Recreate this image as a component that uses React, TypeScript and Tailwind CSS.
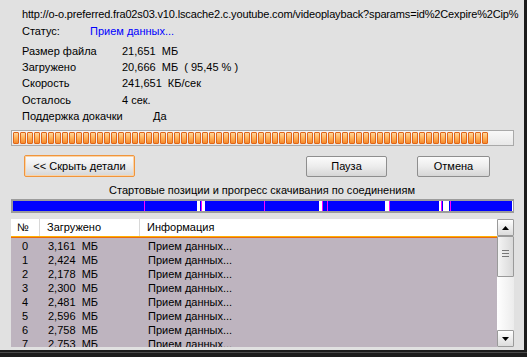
import React from 'react';

const info = [
  { label: 'Размер файла', value: '21,651  МБ' },
  { label: 'Загружено', value: '20,666  МБ  ( 95,45 % )' },
  { label: 'Скорость', value: '241,651  КБ/сек' },
];

const rows = [
  ['0', '3,161  МБ'],
  ['1', '2,424  МБ'],
  ['2', '2,178  МБ'],
  ['3', '2,300  МБ'],
  ['4', '2,481  МБ'],
  ['5', '2,596  МБ'],
  ['6', '2,758  МБ'],
  ['7', '2,753  МБ'],
];

// markers on the connections bar: [left, width, colour]
const marks: [number, number, string][] = [
  [131, 1, '#ff00ff'],
  [184, 3, '#ffffff'],
  [188, 1, '#ff00ff'],
  [189, 3, '#ffffff'],
  [251, 1, '#ff00ff'],
  [306, 3, '#ffffff'],
  [309, 1, '#ff00ff'],
  [314, 1, '#ff00ff'],
  [372, 4, '#ffffff'],
  [376, 1, '#ff00ff'],
  [426, 2, '#ffffff'],
  [428, 1, '#ff00ff'],
  [430, 6, '#ffffff'],
  [437, 1, '#ff00ff'],
  [499, 1, '#ffffff'],
];

function Segments() {
  return (
    <div className="flex h-full items-center pl-[1px]">
      {Array.from({ length: 68 }).map((_, i) => (
        <div
          key={i}
          className="w-[6px] h-[12px] mr-[1px] border border-[#e0661a] rounded-[1px] bg-gradient-to-b from-[#ffd59a] via-[#ffb35a] to-[#f58a2a]"
        />
      ))}
    </div>
  );
}

function Btn({ label, className }: { label: string; className: string }) {
  return (
    <div
      className={`flex items-center justify-center rounded-[2px] bg-gradient-to-b from-[#fbfbfb] via-[#ececec] to-[#d6d6d6] text-[11px] ${className}`}
    >
      {label}
    </div>
  );
}

export default function App() {
  return (
    <div className="w-[527px] h-[357px] bg-[#1c1c1c] flex flex-col overflow-hidden font-['Liberation_Sans',sans-serif] text-[11px] text-black">
      <div className="w-[524px] h-[350px] bg-[#e1e1e1] flex flex-col">
        <div className="pl-[22px] mt-[6px] h-[16px] leading-[16px] whitespace-nowrap tracking-[-0.15px]">
          http://o-o.preferred.fra02s03.v10.lscache2.c.youtube.com/videoplayback?sparams=id%2Cexpire%2Cip%
        </div>
        <div className="pl-[22px] mt-[1px] h-[16px] leading-[16px] flex">
          <span className="w-[68px]">Статус:</span>
          <span className="text-[#0000ff]">Прием данных...</span>
        </div>
        <div className="pl-[22px] mt-[4px] flex flex-col">
          {info.map((r) => (
            <div key={r.label} className="flex h-[16px] leading-[16px] whitespace-pre">
              <span className="w-[100px]">{r.label}</span>
              <span>{r.value}</span>
            </div>
          ))}
          <div className="flex h-[16px] leading-[16px] mt-[1px]">
            <span className="w-[100px]">Осталось</span>
            <span>4 сек.</span>
          </div>
          <div className="flex h-[16px] leading-[16px]">
            <span className="w-[131px]">Поддержка докачки</span>
            <span>Да</span>
          </div>
        </div>

        <div className="ml-[11px] mt-[6px] w-[503px] h-[16px] border border-[#a9a9a9] bg-gradient-to-b from-[#f8f8f8] to-[#e8e8e8]">
          <Segments />
        </div>

        <div className="flex items-start pl-[24px] mt-[9px]">
          <Btn
            label="<< Скрыть детали"
            className="w-[111px] h-[22px] border border-[#f0953c] shadow-[inset_0_0_0_1px_#fbd2a4]"
          />
          <Btn label="Пауза" className="ml-[171px] mt-[1px] w-[81px] h-[21px] border border-[#8e8e8e]" />
          <Btn label="Отмена" className="ml-[30px] mt-[1px] w-[73px] h-[21px] border border-[#8e8e8e]" />
        </div>

        <div className="mt-[5px] h-[16px] leading-[16px] text-center">
          Стартовые позиции и прогресс скачивания по соединениям
        </div>

        <div className="ml-[11px] mt-[1px] w-[503px] h-[14px] border-2 border-[#9c9c9c] bg-[#0000ff] relative">
          {marks.map(([l, w, c], i) => (
            <div
              key={i}
              className="absolute top-0 bottom-0"
              style={{ left: l, width: w, backgroundColor: c }}
            />
          ))}
        </div>

        <div className="ml-[11px] mt-[6px] w-[503px] h-[128px] flex">
          <div className="w-[486px] flex flex-col">
            <div className="h-[17px] bg-white flex leading-[17px]">
              <div className="w-[29px] pl-[6px] border-r border-[#d8d8d8]">№</div>
              <div className="w-[100px] pl-[7px] border-r border-[#d8d8d8]">Загружено</div>
              <div className="pl-[7px]">Информация</div>
            </div>
            <div className="h-[1px] bg-[#ffb000]" />
            <div className="h-[1px] bg-[#e86a10]" />
            <div className="flex-1 bg-[#beb4bf] overflow-hidden pt-[1px]">
              {rows.map(([n, v]) => (
                <div key={n} className="flex h-[14px] leading-[14px] whitespace-pre">
                  <div className="w-[30px] pl-[11px]">{n}</div>
                  <div className="w-[100px] pl-[7px]">{v}</div>
                  <div className="pl-[7px]">Прием данных...</div>
                </div>
              ))}
            </div>
          </div>
          <div className="w-[17px] flex flex-col">
            <div className="h-[17px] border border-[#9a9a9a] rounded-[1px] bg-gradient-to-b from-white to-[#dcdcdc] flex items-center justify-center">
              <svg width="7" height="4" viewBox="0 0 7 4">
                <path d="M3.5 0 L7 4 L0 4 Z" fill="#000" />
              </svg>
            </div>
            <div className="h-[41px] border border-[#9a9a9a] rounded-[1px] bg-gradient-to-r from-[#f4f4f4] to-[#d9d9d9] flex flex-col items-center pt-[13px] gap-[2px]">
              <div className="w-[7px] h-[1px] bg-[#777]" />
              <div className="w-[7px] h-[1px] bg-[#777]" />
              <div className="w-[7px] h-[1px] bg-[#777]" />
            </div>
            <div className="flex-1 bg-gradient-to-r from-white to-[#ececec]" />
            <div className="h-[17px] border border-[#9a9a9a] rounded-[1px] bg-gradient-to-b from-white to-[#dcdcdc] flex items-center justify-center">
              <svg width="7" height="4" viewBox="0 0 7 4">
                <path d="M0 0 L7 0 L3.5 4 Z" fill="#000" />
              </svg>
            </div>
          </div>
        </div>
      </div>
      <div className="h-[2px] w-full bg-[#1c1c1c]" />
      <div className="h-[1px] w-full bg-[#4a4a4a]" />
    </div>
  );
}
